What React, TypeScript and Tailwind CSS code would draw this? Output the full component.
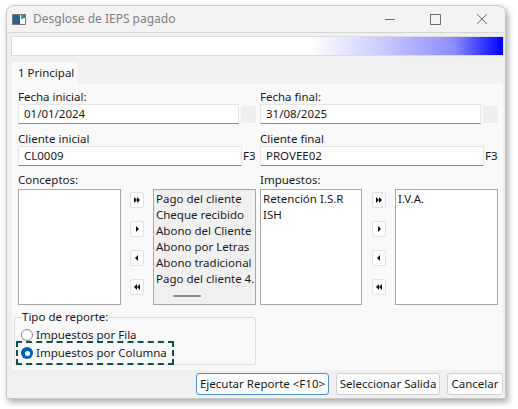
import React from 'react'

const font = { fontFamily: '"Segoe UI", "Noto Sans", "Open Sans", sans-serif' }

const conceptos = [
  'Pago del cliente',
  'Cheque recibido',
  'Abono del Cliente',
  'Abono por Letras',
  'Abono tradicional',
  'Pago del cliente 4.',
]

const Arrow = ({ dir, double }: { dir: 'r' | 'l'; double?: boolean }) => (
  <svg width="8" height="6" viewBox="0 0 8 6">
    {dir === 'r' ? (
      double ? (
        <>
          <path d="M1 0 L4 3 L1 6 Z" fill="#111" />
          <path d="M4 0 L7 3 L4 6 Z" fill="#111" />
        </>
      ) : (
        <path d="M3 0 L6 3 L3 6 Z" fill="#111" />
      )
    ) : double ? (
      <>
        <path d="M4 0 L1 3 L4 6 Z" fill="#111" />
        <path d="M7 0 L4 3 L7 6 Z" fill="#111" />
      </>
    ) : (
      <path d="M5 0 L2 3 L5 6 Z" fill="#111" />
    )}
  </svg>
)

const MoveButtons = () => (
  <div className="flex flex-col gap-[13px] pt-[3px]">
    {[
      { dir: 'r' as const, double: true },
      { dir: 'r' as const, double: false },
      { dir: 'l' as const, double: false },
      { dir: 'l' as const, double: true },
    ].map((b, i) => (
      <div
        key={i}
        className="w-[14px] h-[16px] bg-[#fdfdfd] border border-[#e2e2e2] rounded-[2px] flex items-center justify-center"
      >
        <Arrow dir={b.dir} double={b.double} />
      </div>
    ))}
  </div>
)

const Input = ({ value, w }: { value: string; w: string }) => (
  <div
    className={`${w} h-[20px] bg-white border border-[#e6e6e6] border-b-[#8a8a8a] flex items-center pl-[5px] text-[11.5px] text-[#1a1a1a]`}
  >
    {value}
  </div>
)

const Label = ({ children }: { children: React.ReactNode }) => (
  <div className="h-[15px] leading-[15px] text-[11.5px] text-[#1a1a1a]">{children}</div>
)

export default function App() {
  return (
    <div className="w-[518px] h-[409px] bg-white pt-[5px] pl-[6px]" style={font}>
      <div className="w-[500px] h-[394px] bg-[#f0f0f0] border border-[#c9c9c9] rounded-t-[8px] shadow-[2px_3px_6px_rgba(0,0,0,0.35)] flex flex-col">
        {/* Title bar */}
        <div className="h-[27px] flex items-center border-b border-[#d6d6d6] bg-[#f3f3f3] rounded-t-[8px]">
          <svg width="14" height="11" viewBox="0 0 14 11" className="ml-[5px]">
            <rect x="0.5" y="0.5" width="13" height="10" fill="#fff" stroke="#7a7a7a" />
            <rect x="1" y="1" width="7" height="9" fill="#2a5f8f" />
            <rect x="9" y="1" width="2" height="4" fill="#3aa64a" />
            <rect x="11" y="1" width="2" height="3" fill="#2b78c9" />
          </svg>
          <span className="ml-[7px] text-[12px] text-[#808080]">Desglose de IEPS pagado</span>
          <div className="ml-auto flex items-center">
            <svg width="46" height="27" viewBox="0 0 46 27">
              <path d="M18 13.5 H28" stroke="#707070" strokeWidth="1" />
            </svg>
            <svg width="46" height="27" viewBox="0 0 46 27">
              <rect x="17.5" y="8.5" width="10" height="10" fill="none" stroke="#707070" strokeWidth="1" />
            </svg>
            <svg width="46" height="27" viewBox="0 0 46 27">
              <path d="M18 8 L28 18 M28 8 L18 18" stroke="#707070" strokeWidth="1" />
            </svg>
          </div>
        </div>

        {/* Gradient banner */}
        <div className="mt-[3px] ml-[4px] mr-[1px] h-[20px] border border-[#dcdcdc] bg-[linear-gradient(to_right,#ffffff_61%,#c4c4ff_77%,#8c8cff_90%,#0000ff_100%)]" />

        {/* Tab strip */}
        <div className="mt-[6px] ml-[5px] flex">
          <div className="h-[21px] w-[66px] bg-[#f9f9f9] flex items-center pl-[6px] text-[11.5px] text-[#1a1a1a]">
            1 Principal
          </div>
        </div>

        {/* Tab page */}
        <div className="ml-[5px] mr-[2px] h-[287px] bg-[#f9f9f9] border-t border-[#f4f4f4] pl-[6px] pr-[5px] pt-[5px]">
          <div className="flex gap-[4px]">
            {/* Left column */}
            <div className="w-[238px] flex flex-col">
              <Label>Fecha inicial:</Label>
              <div className="flex items-center gap-[2px]">
                <Input value="01/01/2024" w="w-[221px]" />
                <div className="w-[15px] h-[17px] bg-[#efefef]" />
              </div>
              <div className="mt-[7px]">
                <Label>Cliente inicial</Label>
              </div>
              <div className="flex items-center">
                <Input value="CL0009" w="w-[224px]" />
                <span className="text-[11.5px] text-[#1a1a1a] pl-[1px]">F3</span>
              </div>
              <div className="mt-[6px]">
                <Label>Conceptos:</Label>
              </div>
              <div className="mt-[2px] flex">
                <div className="w-[103px] h-[116px] bg-white border border-[#a8a8a8]" />
                <div className="ml-[9px]">
                  <MoveButtons />
                </div>
                <div className="ml-[9px] w-[103px] h-[116px] bg-[#f0f0f0] border border-[#a8a8a8] pl-[2px] pt-[1px] overflow-hidden flex flex-col">
                  {conceptos.map((c) => (
                    <div key={c} className="h-[16px] leading-[16px] text-[11.5px] text-[#1a1a1a] whitespace-nowrap">
                      {c}
                    </div>
                  ))}
                  <div className="ml-[17px] mt-[8px] w-[28px] h-[2px] rounded-full bg-[#8a8a8a]" />
                </div>
              </div>
            </div>

            {/* Right column */}
            <div className="w-[238px] flex flex-col">
              <Label>Fecha final:</Label>
              <div className="flex items-center gap-[2px]">
                <Input value="31/08/2025" w="w-[221px]" />
                <div className="w-[15px] h-[17px] bg-[#efefef]" />
              </div>
              <div className="mt-[7px]">
                <Label>Cliente final</Label>
              </div>
              <div className="flex items-center">
                <Input value="PROVEE02" w="w-[224px]" />
                <span className="text-[11.5px] text-[#1a1a1a] pl-[1px]">F3</span>
              </div>
              <div className="mt-[6px]">
                <Label>Impuestos:</Label>
              </div>
              <div className="mt-[2px] flex">
                <div className="w-[102px] h-[116px] bg-white border border-[#a8a8a8] pl-[2px] pt-[1px]">
                  {['Retención I.S.R', 'ISH'].map((c) => (
                    <div key={c} className="h-[16px] leading-[16px] text-[11.5px] text-[#1a1a1a]">
                      {c}
                    </div>
                  ))}
                </div>
                <div className="ml-[10px]">
                  <MoveButtons />
                </div>
                <div className="ml-[9px] w-[103px] h-[116px] bg-white border border-[#a8a8a8] pl-[2px] pt-[1px]">
                  <div className="h-[16px] leading-[16px] text-[11.5px] text-[#1a1a1a]">I.V.A.</div>
                </div>
              </div>
            </div>
          </div>

          {/* Tipo de reporte */}
          <div className="relative mt-[12px] -ml-[4px] w-[242px] h-[48px] border border-[#dddddd] rounded-[2px] pt-[8px] pl-[6px]">
            <span className="absolute -top-[9px] left-[6px] px-[1px] bg-[#f9f9f9] text-[11.5px] leading-[16px] text-[#1a1a1a]">
              Tipo de reporte:
            </span>
            <div className="flex items-center h-[18px]">
              <div className="w-[12px] h-[12px] rounded-full border border-[#8a8a8a] bg-white" />
              <span className="ml-[3px] text-[11.5px] text-[#1a1a1a] whitespace-nowrap">Impuestos por Fila</span>
            </div>
            <div className="flex items-center h-[18px] w-[152px] whitespace-nowrap outline-2 outline-dashed outline-[#0d4f4a] outline-offset-[1px] -ml-[2px] pl-[2px]">
              <div className="w-[12px] h-[12px] rounded-full bg-[#005fb8] flex items-center justify-center">
                <div className="w-[5px] h-[5px] rounded-full bg-white" />
              </div>
              <span className="ml-[3px] text-[11.5px] text-[#1a1a1a]">Impuestos por Columna</span>
            </div>
          </div>
        </div>

        {/* Buttons */}
        <div className="mt-[3px] flex justify-end gap-[7px] pr-[2px]">
          <div className="w-[133px] h-[22px] bg-[#fdfdfd] border border-[#4a90d9] rounded-[3px] flex items-center justify-center text-[11.5px] text-[#1a1a1a] whitespace-nowrap">
            Ejecutar Reporte &lt;F10&gt;
          </div>
          <div className="w-[104px] h-[22px] bg-[#fdfdfd] border border-[#d0d0d0] rounded-[3px] flex items-center justify-center text-[11.5px] text-[#1a1a1a] whitespace-nowrap">
            Seleccionar Salida
          </div>
          <div className="w-[56px] h-[22px] bg-[#fdfdfd] border border-[#d0d0d0] rounded-[3px] flex items-center justify-center text-[11.5px] text-[#1a1a1a] whitespace-nowrap">
            Cancelar
          </div>
        </div>
      </div>
    </div>
  )
}
